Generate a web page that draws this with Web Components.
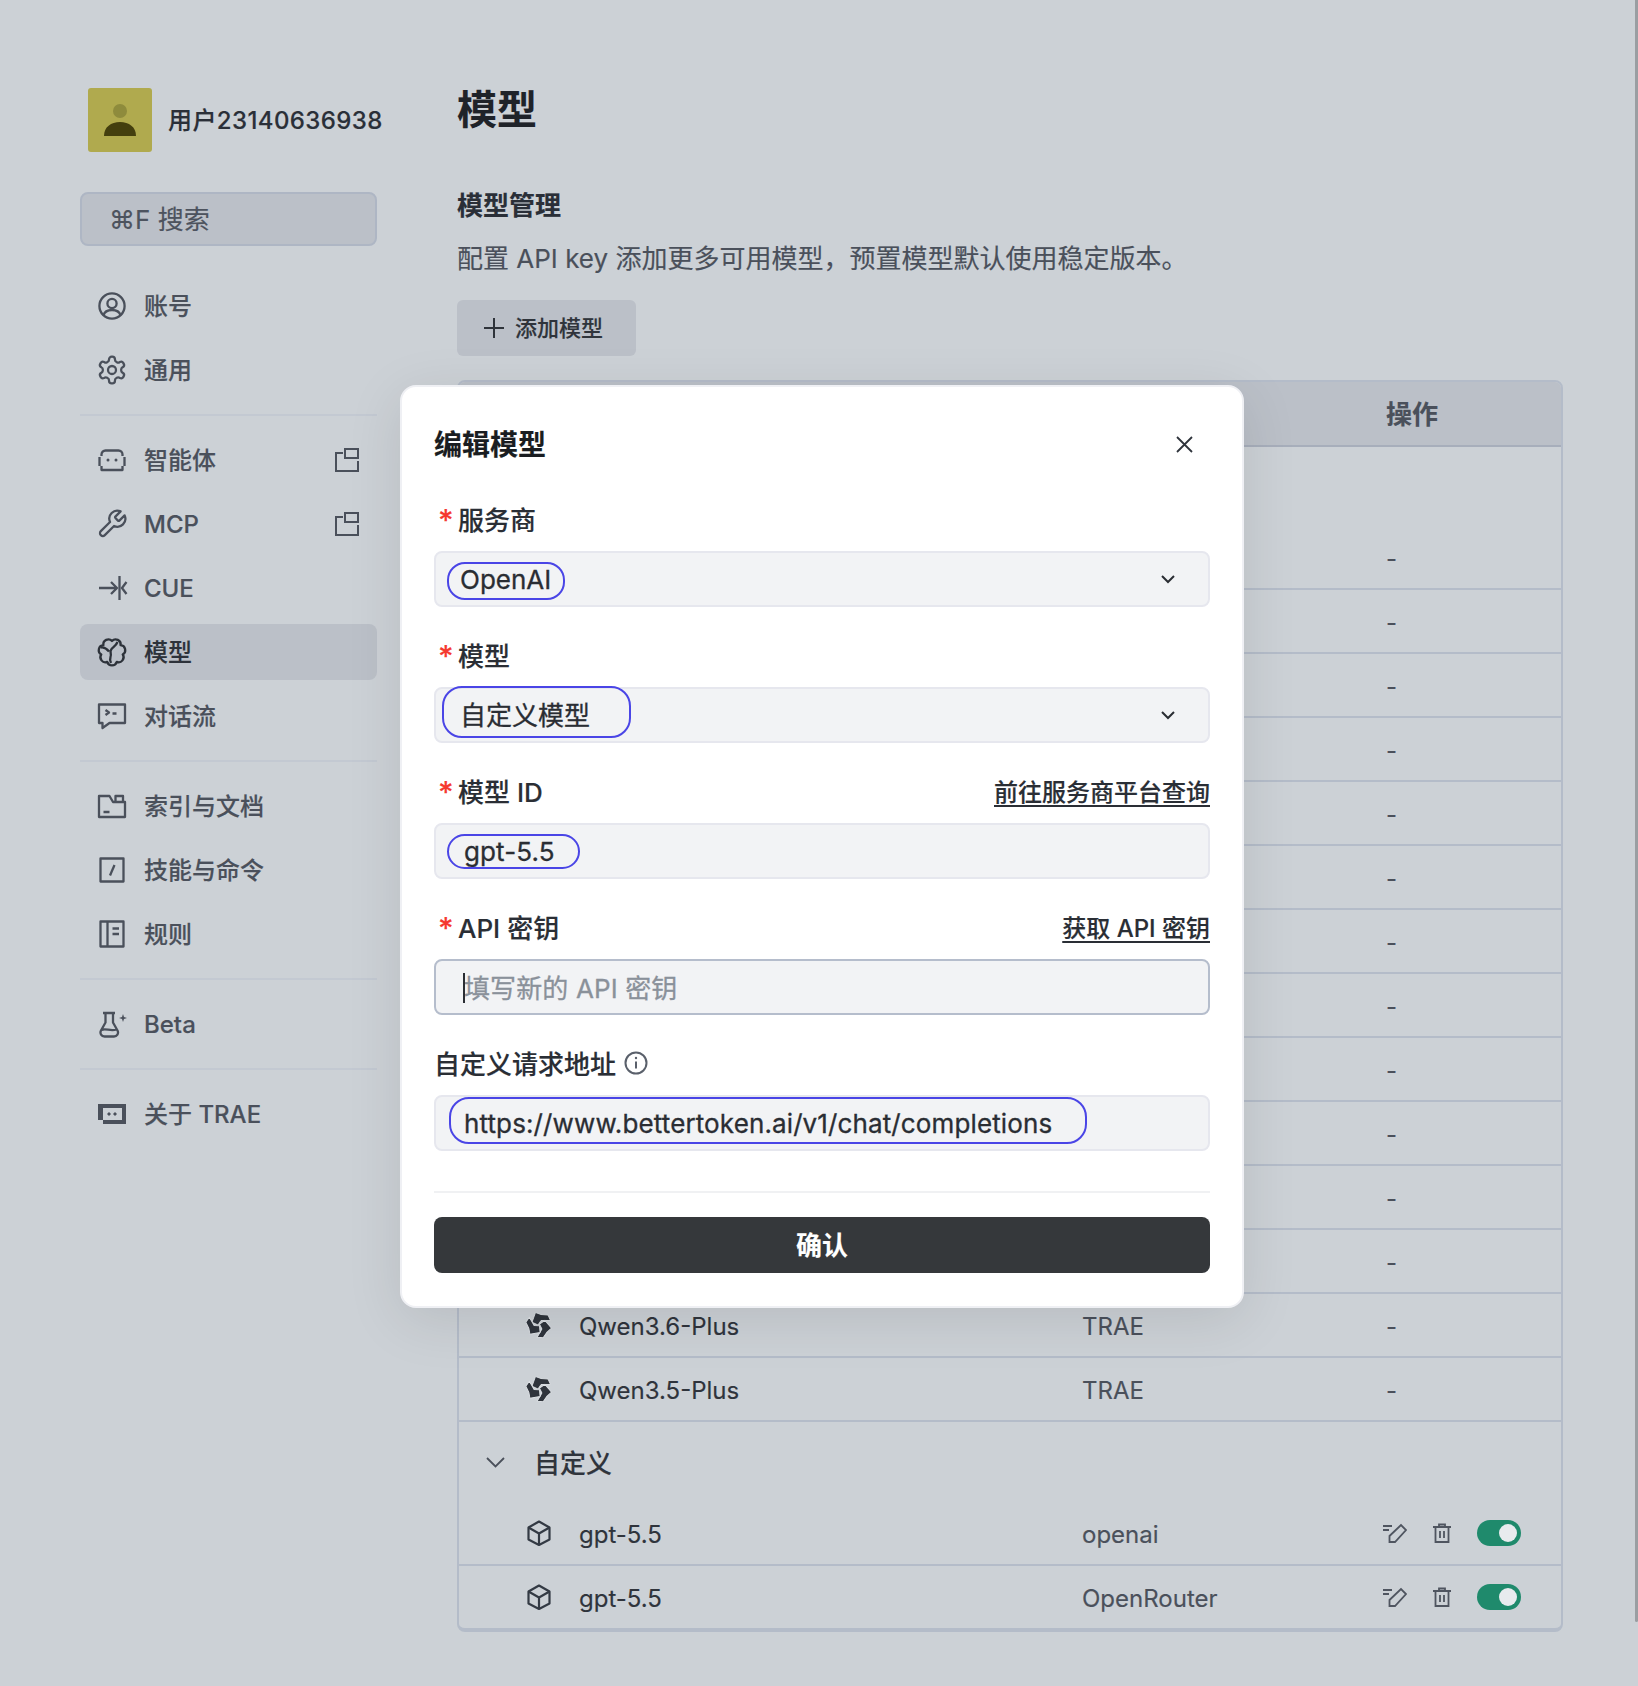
<!DOCTYPE html>
<html lang="zh-CN">
<head>
<meta charset="utf-8">
<title>模型</title>
<style>
  html, body { margin: 0; background: #ccd1d6; }
  body { font-family: Inter, "Noto Sans CJK SC", "Noto Sans", sans-serif; color: #2a2f38; -webkit-text-stroke: .15px; }
</style>
</head>
<body>
<app-shell>
  <side-nav slot="side" user="用户23140636938">
    <nav-item icon="user">账号</nav-item>
    <nav-item icon="gear">通用</nav-item>
    <nav-divider></nav-divider>
    <nav-item icon="bot" ext>智能体</nav-item>
    <nav-item icon="wrench" ext lat>MCP</nav-item>
    <nav-item icon="cue" lat>CUE</nav-item>
    <nav-item icon="brain" active>模型</nav-item>
    <nav-item icon="chat">对话流</nav-item>
    <nav-divider></nav-divider>
    <nav-item icon="folder">索引与文档</nav-item>
    <nav-item icon="slash">技能与命令</nav-item>
    <nav-item icon="book">规则</nav-item>
    <nav-divider></nav-divider>
    <nav-item icon="flask" lat>Beta</nav-item>
    <nav-divider></nav-divider>
    <nav-item icon="trae">关于 TRAE</nav-item>
  </side-nav>

  <model-table>
    <model-group></model-group>
    <model-row></model-row><model-row></model-row><model-row></model-row><model-row></model-row>
    <model-row></model-row><model-row></model-row><model-row></model-row><model-row></model-row>
    <model-row></model-row><model-row></model-row><model-row></model-row><model-row></model-row>
    <model-row icon="qwen" name="Qwen3.6-Plus" provider="TRAE"></model-row>
    <model-row icon="qwen" name="Qwen3.5-Plus" provider="TRAE"></model-row>
    <model-group label="自定义"></model-group>
    <model-row icon="cube" name="gpt-5.5" provider="openai" custom></model-row>
    <model-row icon="cube" name="gpt-5.5" provider="OpenRouter" custom last></model-row>
  </model-table>

  <edit-modal slot="overlay">
    <form-field required select pad="24" mark="11,9,118,38,18">
      <span slot="label">服务商</span>OpenAI
    </form-field>
    <form-field required select cjk pad="24" mark="6,-3,189,52,20">
      <span slot="label">模型</span>自定义模型
    </form-field>
    <form-field required pad="28" mark="11,9,133,35,18">
      <span slot="label">模型 ID</span>
      <span slot="link">前往服务商平台查询</span>gpt-5.5
    </form-field>
    <form-field required pad="28" active placeholder="填写新的 API 密钥">
      <span slot="label">API 密钥</span>
      <span slot="link">获取 API 密钥</span>
    </form-field>
    <form-field pad="28" info mark="13,0,638,47,20">
      <span slot="label">自定义请求地址</span>https://www.bettertoken.ai/v1/chat/completions
    </form-field>
  </edit-modal>
</app-shell>

<script>
const ICONS = {
  user: '<circle cx="16" cy="16" r="12.6"/><circle cx="16" cy="13.5" r="4.6"/><path d="M7.5 25.5c1-4 4-5.5 8.5-5.5s7.500 1.500 8.500 5.500"/>',
  gear: '<g transform="scale(1.333)" stroke-width="1.700"><path d="M12.220 2h-.440a2 2 0 0 0-2 2v.180a2 2 0 0 1-1 1.730l-.430.250a2 2 0 0 1-2 0l-.150-.080a2 2 0 0 0-2.730.730l-.220.380a2 2 0 0 0 .730 2.730l.150.100a2 2 0 0 1 1 1.720v.510a2 2 0 0 1-1 1.740l-.150.090a2 2 0 0 0-.730 2.730l.220.380a2 2 0 0 0 2.730.730l.150-.080a2 2 0 0 1 2 0l.430.250a2 2 0 0 1 1 1.730V20a2 2 0 0 0 2 2h.440a2 2 0 0 0 2-2v-.180a2 2 0 0 1 1-1.730l.430-.250a2 2 0 0 1 2 0l.150.080a2 2 0 0 0 2.730-.730l.220-.390a2 2 0 0 0-.730-2.730l-.150-.080a2 2 0 0 1-1-1.740v-.500a2 2 0 0 1 1-1.740l.150-.090a2 2 0 0 0 .730-2.730l-.220-.380a2 2 0 0 0-2.730-.730l-.150.080a2 2 0 0 1-2 0l-.430-.250a2 2 0 0 1-1-1.730V4a2 2 0 0 0-2-2z"/><circle cx="12" cy="12" r="3"/></g>',
  bot: '<path d="M5.500 12V10.500a4 4 0 0 1 4-4h13a4 4 0 0 1 4 4V12M5.500 22v4h21v-4"/><path d="M3.500 13v9M28.500 13v9"/><circle cx="12" cy="16" r="1.500" fill="currentColor" stroke="none"/><circle cx="20" cy="16" r="1.500" fill="currentColor" stroke="none"/>',
  wrench: '<g transform="scale(1.333)" stroke-width="1.700"><path d="M14.700 6.300a1 1 0 0 0 0 1.400l1.600 1.600a1 1 0 0 0 1.400 0l3.770-3.770a6 6 0 0 1-7.940 7.940l-6.910 6.910a2.120 2.120 0 0 1-3-3l6.910-6.910a6 6 0 0 1 7.940-7.940l-3.760 3.760z"/></g>',
  cue: '<path d="M3 16h18M15 10l6 6-6 6M23.500 4v24M30.500 10l-4.500 6 4.500 6"/>',
  brain: '<path d="M16 5A5 5 0 0 1 24.600 9.140 5 5 0 0 1 26.720 18.450 5 5 0 0 1 20.770 25.910 5 5 0 0 1 11.230 25.910 5 5 0 0 1 5.280 18.450 5 5 0 0 1 7.400 9.140 5 5 0 0 1 16 5z"/><path d="M21.500 6c-1.500 4-4.500 5-6 7-2.500 3 .500 5-1 8-.700 2-.500 4 .500 6M5 11.500c3-.500 6 1.500 8 4"/>',
  chat: '<path d="M3 4.500h26V23H13.500l-7 5v-5H3z"/><path d="M9.500 10l3.500 2.500-3.500 2.500M16.500 13.500h4"/>',
  folder: '<path d="M3 27V6h10.500l3.500 6h12v15z"/><path d="M19.500 12V6H27v6M7.500 22h6"/>',
  slash: '<rect x="4.500" y="4.500" width="23" height="23"/><path d="M18.500 11l-4.500 10.500"/>',
  book: '<rect x="4.500" y="3.500" width="23" height="25"/><path d="M11.500 3.500v25M16.500 10.500h6.500M16.500 16h6.500"/>',
  flask: '<path d="M7 5h12M9.500 5v9.500L5 22.500c-1.500 3 .500 6 3.500 6h9.500c3 0 5-3 3.500-6L17 14.500V5M5.500 22c4-2 9 1.500 15-.500"/><path d="M27 6l1 3 3 1-3 1-1 3-1-3-3-1 3-1z" fill="currentColor" stroke="none"/>',
  trae: '<path fill-rule="evenodd" fill="currentColor" stroke="none" d="M2 6h28v20H7v-4H2zM7 10v12h19V10z"/><path fill="currentColor" stroke="none" d="M13 14l2 2-2 2-2-2zM19 14l2 2-2 2-2-2z"/>'
};

const EXT_ICON = '<svg width="24" height="24" viewBox="0 0 24 24" fill="none" stroke="currentColor" stroke-width="2"><path d="M8 5H1v18h22V13"/><rect x="10" y="1" width="13" height="9"/></svg>';

const QWEN_BLADE = '<path d="M9.500 .500l5.500 2 7 .500 2.500 5.500H15l-3 4.500-6-2.800z" fill="#2f343c" stroke="#dfe3e7" stroke-width=".9" stroke-linejoin="round"/>';

class AppShell extends HTMLElement {
  constructor() {
    super();
    this.attachShadow({ mode: 'open' });
    this.shadowRoot.innerHTML = `
      <style>
        :host { display: block; position: relative; height: 1686px; overflow: hidden; box-sizing: border-box; padding: 80px 75px 0 80px; }
        .page { display: flex; gap: 80px; }
        .side { width: 297px; flex: none; padding-top: 8px; }
        main { flex: 1; min-width: 0; }
        h1 { margin: 2px 0 0; font-size: 40px; line-height: 56px; font-weight: 700; color: #1f2329; }
        h2 { margin: 50px 0 0; font-size: 26px; line-height: 36px; font-weight: 700; color: #2a2f38; }
        p { margin: 17px 0 0; font-size: 26px; line-height: 36px; color: #4a505b; }
        .add { display: flex; align-items: center; gap: 11px; margin-top: 23px; width: 179px; height: 56px; box-sizing: border-box; padding-left: 27px; border-radius: 6px; background: #bbc0c8; color: #2f343b; font-size: 22px; font-weight: 500; }
        .add span { padding-bottom: 4px; }
        .table { margin-top: 24px; }
        .thumb { position: absolute; top: 0; right: 0; width: 3px; height: 1622px; background: #9a9ea2; border-radius: 0 0 2px 2px; }
      </style>
      <div class="page">
        <div class="side"><slot name="side"></slot></div>
        <main>
          <h1>模型</h1>
          <h2>模型管理</h2>
          <p>配置 API key 添加更多可用模型，预置模型默认使用稳定版本。</p>
          <div class="add">
            <svg width="20" height="20" viewBox="0 0 20 20" fill="none" stroke="currentColor" stroke-width="2"><path d="M10 0v20M0 10h20"/></svg>
            <span>添加模型</span>
          </div>
          <div class="table"><slot></slot></div>
        </main>
      </div>
      <slot name="overlay"></slot>
      <div class="thumb"></div>
    `;
  }
}

class SideNav extends HTMLElement {
  constructor() {
    super();
    this.attachShadow({ mode: 'open' });
    this.shadowRoot.innerHTML = `
      <style>
        :host { display: block; }
        .user { display: flex; align-items: center; gap: 16px; padding-left: 8px; font-size: 24px; letter-spacing: .4px; font-weight: 500; color: #2a2f38; white-space: nowrap; }
        .user span { padding-bottom: 3px; }
        .avatar { width: 64px; height: 64px; flex: none; border-radius: 3px; display: block; }
        .search { margin-top: 40px; height: 54px; box-sizing: border-box; border: 2px solid #aeb6c4; border-radius: 8px; background: #bbc0c8; padding: 0 0 4px 27px; display: flex; align-items: center; font-size: 26px; color: #4d535e; }
        .list { margin-top: 32px; display: flex; flex-direction: column; gap: 8px; }
      </style>
      <div class="user">
        <svg class="avatar" viewBox="0 0 64 64"><rect width="64" height="64" fill="#b0aa4e"/><circle cx="32" cy="23" r="7" fill="#8e8b3c"/><path d="M16 48c0-9 7-14 16-14s16 5 16 14z" fill="#443f0e"/></svg>
        <span>${this.getAttribute('user') || ''}</span>
      </div>
      <div class="search">⌘F 搜索</div>
      <div class="list"><slot></slot></div>
    `;
  }
}

class NavItem extends HTMLElement {
  constructor() {
    super();
    this.attachShadow({ mode: 'open' });
    const icon = ICONS[this.getAttribute('icon')] || '';
    this.shadowRoot.innerHTML = `
      <style>
        :host { display: flex; align-items: center; gap: 16px; height: 56px; box-sizing: border-box; padding: 0 18px 0 16px; border-radius: 8px; font-size: 24px; font-weight: 500; color: #4a505b; }
        :host([active]) { background: #bbc0c8; color: #2d323a; }
        svg { flex: none; display: block; }
        .label { flex: 1; white-space: nowrap; padding-bottom: 4px; }
        :host([lat]) .label { padding-bottom: 0; }
      </style>
      <svg width="32" height="32" viewBox="0 0 32 32" fill="none" stroke="currentColor" stroke-width="2.300" stroke-linejoin="round">${icon}</svg>
      <span class="label"><slot></slot></span>
      ${this.hasAttribute('ext') ? EXT_ICON : ''}
    `;
  }
}

class NavDivider extends HTMLElement {
  constructor() {
    super();
    this.attachShadow({ mode: 'open' });
    this.shadowRoot.innerHTML = `
      <style>:host { display: block; height: 2px; margin: 8px 0; background: #c3c9d2; }</style>
    `;
  }
}

class ModelTable extends HTMLElement {
  constructor() {
    super();
    this.attachShadow({ mode: 'open' });
    this.shadowRoot.innerHTML = `
      <style>
        :host { display: block; box-sizing: border-box; height: 1252px; border: 2px solid #b4bcc9; border-bottom-width: 4px; border-radius: 8px; overflow: hidden; }
        .head { height: 65px; box-sizing: border-box; padding-bottom: 2px; display: grid; grid-template-columns: 927px 1fr; align-items: center; background: #bbc0c8; border-bottom: 2px solid #a7aebb; font-size: 26px; font-weight: 700; color: #4a505b; }
      </style>
      <div class="head"><span></span><span>操作</span></div>
      <slot></slot>
    `;
  }
}

class ModelGroup extends HTMLElement {
  constructor() {
    super();
    this.attachShadow({ mode: 'open' });
    const label = this.getAttribute('label') || '';
    this.shadowRoot.innerHTML = `
      <style>
        :host { display: flex; align-items: center; gap: 29px; height: 79px; padding-left: 27px; font-size: 26px; font-weight: 500; color: #2f343c; }
        :host([label]) { height: 80px; }
        svg { display: block; }
        span { padding-bottom: 2px; }
      </style>
      <svg width="19" height="11" viewBox="0 0 19 11" fill="none" stroke="#4a505b" stroke-width="1.800"><path d="M1 1l8.500 8.500L18 1"/></svg>
      <span>${label}</span>
    `;
  }
}

class ModelRow extends HTMLElement {
  constructor() {
    super();
    this.attachShadow({ mode: 'open' });
    const name = this.getAttribute('name') || '';
    const provider = this.getAttribute('provider') || '';
    const icon = this.getAttribute('icon');
    let logo = '';
    if (icon === 'qwen') {
      logo = `<svg width="26" height="26" viewBox="0 0 26 26">
        <g>${QWEN_BLADE}</g><g transform="rotate(120 13 13)">${QWEN_BLADE}</g><g transform="rotate(240 13 13)">${QWEN_BLADE}</g></svg>`;
    } else if (icon === 'cube') {
      logo = `<svg width="26" height="26" viewBox="0 0 26 26" fill="none" stroke="#333a44" stroke-width="2.200" stroke-linejoin="round"><path d="M13 1.500l10.500 6v12L13 25 2.500 19.500v-12z"/><path d="M2.500 7.500L13 13.500l10.500-6M13 13.500V25"/></svg>`;
    }
    const ops = this.hasAttribute('custom') ? `
      <div class="ops">
        <svg width="24" height="20" viewBox="0 0 24 20" fill="none" stroke="#4f5560" stroke-width="1.800"><path d="M0 3h9M0 7h6M6.500 19v-6L18 2l5 5-11 12z"/></svg>
        <svg width="18" height="20" viewBox="0 0 18 20" fill="none" stroke="#4f5560" stroke-width="1.800"><path d="M0 4h18M6 4V1.500h6V4M2.500 4v15h13V4M7 8v7M11 8v7"/></svg>
        <span class="toggle"><i></i></span>
      </div>` : '<span class="dash">-</span>';
    this.shadowRoot.innerHTML = `
      <style>
        :host { display: grid; grid-template-columns: 623px 304px 1fr; align-items: center; height: 64px; box-sizing: border-box; padding-top: 2px; border-bottom: 2px solid #b4bcc9; font-size: 24px; color: #4a505b; }
        :host([last]) { height: 62px; border-bottom: 0; }
        .name { display: flex; align-items: center; gap: 27px; padding-left: 67px; color: #2f343c; }
        .name svg { margin-bottom: 2px; }
        svg { display: block; flex: none; }
        .dash { line-height: 1; padding-top: 2px; }
        .ops { display: flex; align-items: center; gap: 26px; margin: -2px 0 0 -3px; }
        .toggle { width: 44px; height: 26px; border-radius: 13px; background: #1f8a6c; position: relative; display: block; }
        .toggle i { position: absolute; right: 4px; top: 4px; width: 18px; height: 18px; border-radius: 50%; background: #e8ebee; }
      </style>
      <div class="name">${logo}<span>${name}</span></div>
      <div>${provider}</div>
      ${ops}
    `;
  }
}

class EditModal extends HTMLElement {
  constructor() {
    super();
    this.attachShadow({ mode: 'open' });
    this.shadowRoot.innerHTML = `
      <style>
        :host { position: absolute; left: 400px; top: 385px; width: 844px; height: 923px; box-sizing: border-box; padding: 40px 32px 0; background: #fff; border: 2px solid #eff0f4; border-radius: 16px; box-shadow: 0 12px 56px rgba(0,0,0,.1); display: block; }
        .head { display: flex; align-items: center; justify-content: space-between; height: 36px; margin-bottom: 39px; padding-right: 17px; font-size: 28px; font-weight: 700; color: #1a1d21; }
        .head span { padding-bottom: 4px; }
        svg { display: block; margin-bottom: 2px; }
        hr { border: 0; height: 2px; background: #f0f1f3; margin: 9px 0 24px; }
        button { display: block; width: 100%; height: 56px; border: 0; padding: 0 0 4px; border-radius: 8px; background: #35383b; color: #fff; font: inherit; font-size: 26px; font-weight: 700; }
      </style>
      <div class="head">
        <span>编辑模型</span>
        <svg width="17" height="17" viewBox="0 0 17 17" fill="none" stroke="#2f343c" stroke-width="1.800"><path d="M1 1l15 15M16 1L1 16"/></svg>
      </div>
      <slot></slot>
      <hr>
      <button>确认</button>
    `;
  }
}

class FormField extends HTMLElement {
  constructor() {
    super();
    this.attachShadow({ mode: 'open' });
    const pad = this.getAttribute('pad') || '24';
    const ph = this.getAttribute('placeholder');
    const markAttr = this.getAttribute('mark');
    let mark = '';
    if (markAttr) {
      const [l, t, w, h, r] = markAttr.split(',');
      mark = `<div class="mark" style="left:${l}px;top:${t}px;width:${w}px;height:${h}px;border-radius:${r}px"></div>`;
    }
    this.shadowRoot.innerHTML = `
      <style>
        :host { display: block; padding-bottom: 31px; font-size: 26px; }
        .top { display: flex; align-items: center; justify-content: space-between; height: 36px; margin-bottom: 13px; }
        .label { display: flex; align-items: center; font-weight: 500; color: #2a2e35; white-space: nowrap; }
        .text { padding-bottom: 4px; }
        .star { width: 24px; box-sizing: border-box; padding-left: 4px; color: #f5392f; font-size: 30px; line-height: 36px; font-weight: 500; }
        .info { margin-left: 8px; display: block; margin-bottom: 2px; }
        ::slotted([slot=link]) { display: block; padding-bottom: 4px; font-size: 24px; font-weight: 500; color: #2a2e35; text-decoration: underline; text-underline-offset: 4px; }
        .box { position: relative; height: 56px; box-sizing: border-box; border: 2px solid #e6e7ee; border-radius: 8px; background: #f2f3f5; display: flex; align-items: center; padding-left: ${pad}px; color: #2a2d33; white-space: nowrap; -webkit-text-stroke: .3px; }
        :host(:not([select])) .box { letter-spacing: .12px; }
        :host([cjk]) .box { padding-bottom: 4px; }
        :host([active]) .box { border-color: #b5bdcc; }
        .ph { color: #8a919a; padding-bottom: 2px; }
        .caret { position: absolute; left: 27px; top: 12px; width: 1.500px; height: 30px; background: #2a2d33; }
        .chev { position: absolute; right: 33px; top: 22px; display: block; }
        .mark { position: absolute; box-sizing: border-box; border: 2.400px solid #4a45e6; pointer-events: none; }
      </style>
      <div class="top">
        <div class="label">
          ${this.hasAttribute('required') ? '<span class="star">*</span>' : ''}
          <span class="text"><slot name="label"></slot></span>
          ${this.hasAttribute('info') ? '<svg class="info" width="24" height="24" viewBox="0 0 24 24" fill="none" stroke="#5a606b" stroke-width="2"><circle cx="12" cy="12" r="10.500"/><path d="M12 10.500v7"/><circle cx="12" cy="7" r="1.200" fill="#5a606b" stroke="none"/></svg>' : ''}
        </div>
        <slot name="link"></slot>
      </div>
      <div class="box">
        <slot></slot>
        ${ph ? `<span class="ph">${ph}</span><i class="caret"></i>` : ''}
        ${this.hasAttribute('select') ? '<svg class="chev" width="14" height="9" viewBox="0 0 14 9" fill="none" stroke="#2a2d33" stroke-width="2"><path d="M1 1l6 6 6-6"/></svg>' : ''}
        ${mark}
      </div>
    `;
  }
}

customElements.define('app-shell', AppShell);
customElements.define('side-nav', SideNav);
customElements.define('nav-item', NavItem);
customElements.define('nav-divider', NavDivider);
customElements.define('model-table', ModelTable);
customElements.define('model-group', ModelGroup);
customElements.define('model-row', ModelRow);
customElements.define('edit-modal', EditModal);
customElements.define('form-field', FormField);
</script>
</body>
</html>
